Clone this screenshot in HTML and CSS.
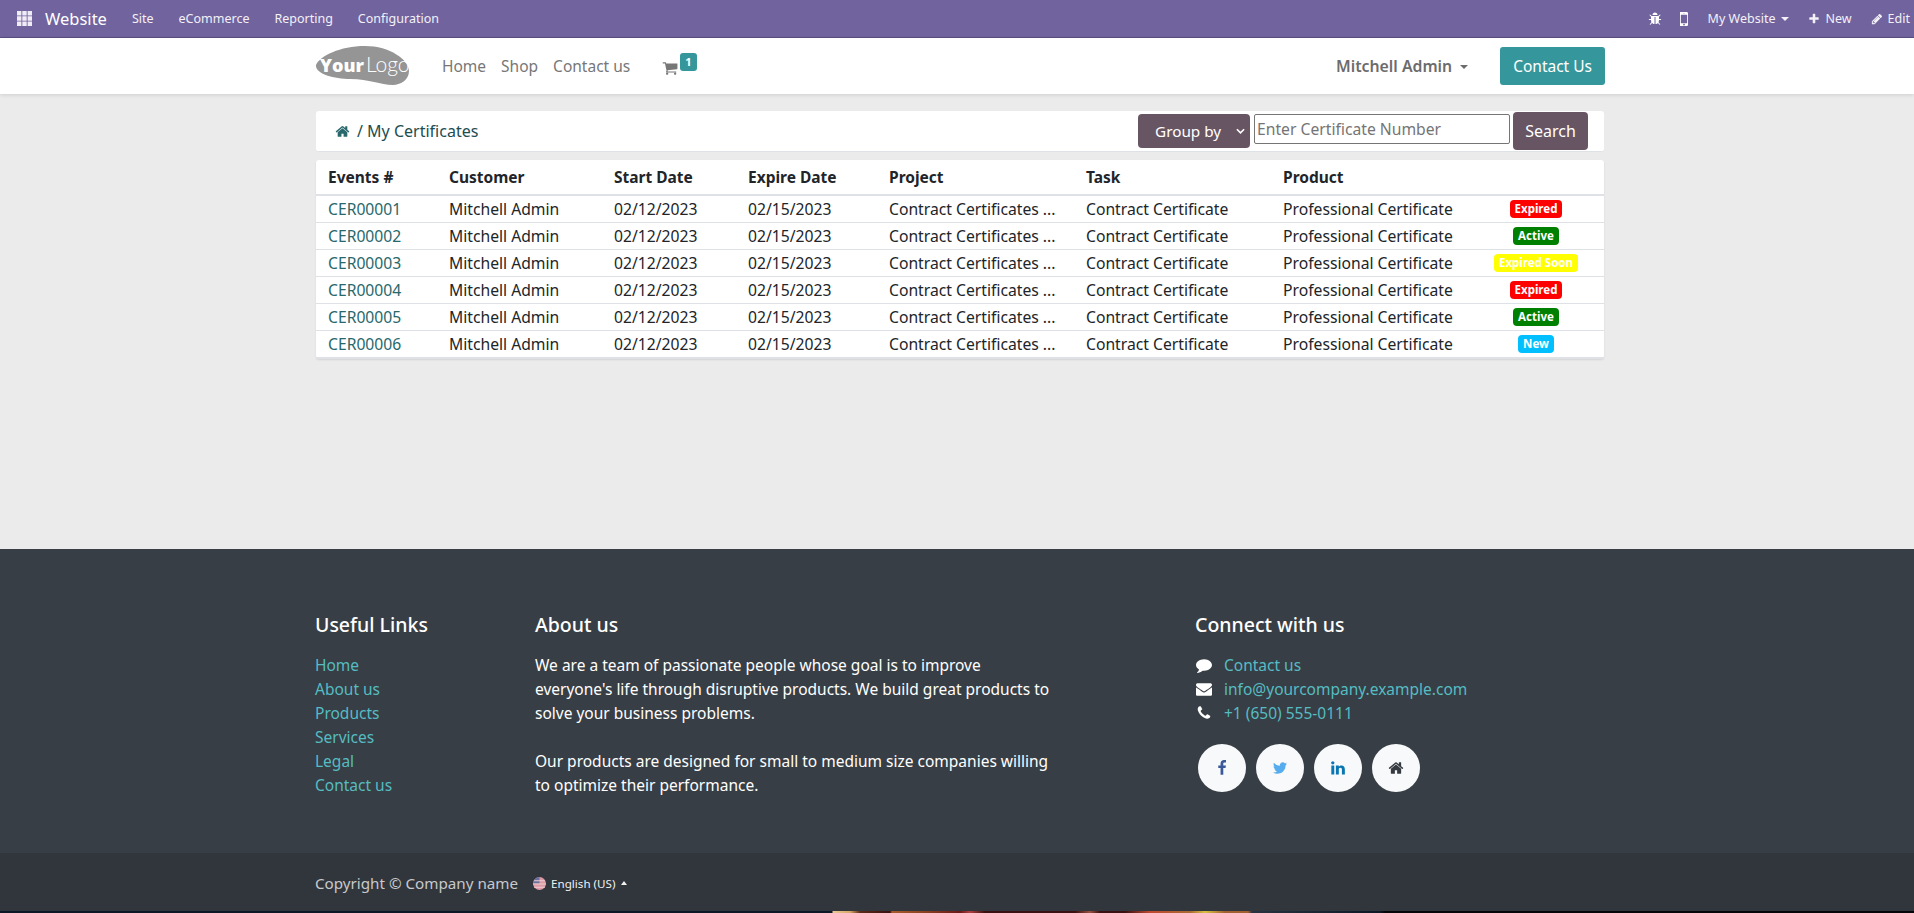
FILE: index.html
```html
<!DOCTYPE html>
<html lang="en">

<head>
  <meta charset="UTF-8">
  <meta name="viewport" content="width=device-width, initial-scale=1.0">
  <link rel="stylesheet" href="styles.css">
  <title>My Certificates</title>
</head>

<body>

  <div class="topbar">
    <div class="topbar-left">
      <svg class="apps-icon" viewBox="0 0 17 17"><path d="M0 0h5v5H0zM6 0h5v5H6zM12 0h5v5h-5zM0 6h5v5H0zM6 6h5v5H6zM12 6h5v5h-5zM0 12h5v5H0zM6 12h5v5H6zM12 12h5v5h-5z"/></svg>
      <span class="brand">Website</span>
      <a>Site</a>
      <a>eCommerce</a>
      <a>Reporting</a>
      <a>Configuration</a>
    </div>
    <div class="topbar-right">
      <svg class="tb-icon" viewBox="0 0 1792 1792"><path d="M1696 960q0 26-19 45t-45 19h-224q0 171-67 290l208 209q19 19 19 45t-19 45q-18 19-45 19t-45-19l-198-197q-5 5-15 13t-42 28.500-65 36.500-82 29-97 13v-896h-128v896q-51 0-101.500-13.500t-87-33-66-39-43.500-32.500l-15-14-183 207q-20 21-48 21-24 0-43-16-19-18-20.500-44.500t15.500-46.500l202-227q-58-114-58-274h-224q-26 0-45-19t-19-45 19-45 45-19h224v-294l-173-173q-19-19-19-45t19-45 45-19 45 19l173 173h844l173-173q19-19 45-19t45 19 19 45-19 45l-173 173v294h224q26 0 45 19t19 45zm-480-576h-640q0-133 93.500-226.500t226.500-93.500 226.500 93.500 93.500 226.500z"/></svg>
      <svg class="tb-icon mobile" viewBox="576 256 640 1280"><path d="M976 1408q0-33-23.500-56.500t-56.500-23.500-56.500 23.500-23.500 56.500 23.500 56.500 56.500 23.500 56.500-23.500 23.500-56.500zm208-160v-704q0-13-9.500-22.500t-22.500-9.500h-512q-13 0-22.500 9.500t-9.500 22.500v704q0 13 9.500 22.500t22.500 9.500h512q13 0 22.500-9.500t9.500-22.500zm-192-848q0-16-16-16h-160q-16 0-16 16t16 16h160q16 0 16-16zm288-16v1024q0 52-38 90t-90 38h-640q-52 0-90-38t-38-90v-1024q0-52 38-90t90-38h640q52 0 90 38t38 90z"/></svg>
      <a class="caret-link">My Website</a>
      <a class="icon-link"><svg class="tb-icon small" viewBox="0 0 1792 1792"><path d="M1600 736v192q0 40-28 68t-68 28h-416v416q0 40-28 68t-68 28h-192q-40 0-68-28t-28-68v-416h-416q-40 0-68-28t-28-68v-192q0-40 28-68t68-28h416v-416q0-40 28-68t68-28h192q40 0 68 28t28 68v416h416q40 0 68 28t28 68z"/></svg>New</a>
      <a class="icon-link"><svg class="tb-icon small" viewBox="0 0 1792 1792"><path d="M491 1536l91-91-235-235-91 91v107h128v128h107zm523-928q0-22-22-22-10 0-17 7l-542 542q-7 7-7 17 0 22 22 22 10 0 17-7l542-542q7-7 7-17zm-54-192l416 416-832 832h-416v-416zm683 96q0 53-37 90l-166 166-416-416 166-165q36-38 90-38 53 0 91 38l235 234q37 39 37 91z"/></svg>Edit</a>
    </div>
  </div>

  <header class="navbar">
    <div class="container navbar-inner">
      <svg class="logo" viewBox="0 0 96 40">
        <path d="M1 19C5 10 25 0 50 0c25 0 44 14 44 25 0 9-9 14-16 14-13 0-23-6-43-6C20 33 0 28 1 19z" fill="#959595"/>
        <text x="5" y="26"><tspan class="logo-your">Your</tspan><tspan class="logo-logo" dx="2">Logo</tspan></text>
      </svg>
      <nav class="main-nav">
        <a>Home</a>
        <a>Shop</a>
        <a>Contact us</a>
      </nav>
      <div class="cart">
        <svg class="cart-icon" viewBox="0 0 1792 1792"><path d="M704 1536q0 52-38 90t-90 38-90-38-38-90 38-90 90-38 90 38 38 90zm896 0q0 52-38 90t-90 38-90-38-38-90 38-90 90-38 90 38 38 90zm128-1088v512q0 24-16.500 42.500t-40.500 21.500l-1044 122q13 60 13 70 0 16-24 64h920q26 0 45 19t19 45-19 45-45 19h-1024q-26 0-45-19t-19-45q0-11 8-31.500t16-36 21.500-40 15.500-29.500l-177-823h-204q-26 0-45-19t-19-45 19-45 45-19h256q16 0 28.500 6.500t19.500 15.500 13 24.500 8 26 5.500 29.500 4.500 26h1201q26 0 45 19t19 45z"/></svg>
        <span class="cart-badge">1</span>
      </div>
      <div class="user-menu">Mitchell Admin</div>
      <a class="contact-btn">Contact Us</a>
    </div>
  </header>

  <main class="content">
    <div class="container">
      <div class="breadcrumb-card">
        <div class="crumbs">
          <svg class="crumb-home" viewBox="0 0 1792 1792"><path d="M1472 992v480q0 26-19 45t-45 19h-384v-384h-256v384h-384q-26 0-45-19t-19-45v-480q0-1 .5-3t.5-3l575-474 575 474q1 2 1 6zm223-69l-62 74q-8 9-21 11h-3q-13 0-21-7l-692-577-692 577q-12 8-24 7-13-2-21-11l-62-74q-8-10-7-23.500t11-21.500l719-599q32-26 76-26t76 26l244 204v-195q0-14 9-23t23-9h192q14 0 23 9t9 23v408l219 182q10 8 11 21.500t-7 23.500z"/></svg>
          <span>/ My Certificates</span>
        </div>
        <div class="search-tools">
          <div class="group-by">Group by<svg viewBox="0 0 10 6"><path d="M1 1l4 4 4-4" fill="none" stroke="#fff" stroke-width="1.800"/></svg></div>
          <input class="search-input" type="text" placeholder="Enter Certificate Number">
          <button class="search-btn">Search</button>
        </div>
      </div>

      <div class="table-card">
        <table class="cert-table">
          <colgroup>
            <col class="col-event"><col class="col-customer"><col class="col-start"><col class="col-expire"><col class="col-project"><col class="col-task"><col class="col-product"><col>
          </colgroup>
          <thead>
            <tr><th>Events #</th><th>Customer</th><th>Start Date</th><th>Expire Date</th><th>Project</th><th>Task</th><th>Product</th><th></th></tr>
          </thead>
          <tbody>
            <tr><td><a>CER00001</a></td><td>Mitchell Admin</td><td>02/12/2023</td><td>02/15/2023</td><td>Contract Certificates ...</td><td>Contract Certificate</td><td>Professional Certificate</td><td class="status"><span class="badge red">Expired</span></td></tr>
            <tr><td><a>CER00002</a></td><td>Mitchell Admin</td><td>02/12/2023</td><td>02/15/2023</td><td>Contract Certificates ...</td><td>Contract Certificate</td><td>Professional Certificate</td><td class="status"><span class="badge green">Active</span></td></tr>
            <tr><td><a>CER00003</a></td><td>Mitchell Admin</td><td>02/12/2023</td><td>02/15/2023</td><td>Contract Certificates ...</td><td>Contract Certificate</td><td>Professional Certificate</td><td class="status"><span class="badge yellow">Expired Soon</span></td></tr>
            <tr><td><a>CER00004</a></td><td>Mitchell Admin</td><td>02/12/2023</td><td>02/15/2023</td><td>Contract Certificates ...</td><td>Contract Certificate</td><td>Professional Certificate</td><td class="status"><span class="badge red">Expired</span></td></tr>
            <tr><td><a>CER00005</a></td><td>Mitchell Admin</td><td>02/12/2023</td><td>02/15/2023</td><td>Contract Certificates ...</td><td>Contract Certificate</td><td>Professional Certificate</td><td class="status"><span class="badge green">Active</span></td></tr>
            <tr><td><a>CER00006</a></td><td>Mitchell Admin</td><td>02/12/2023</td><td>02/15/2023</td><td>Contract Certificates ...</td><td>Contract Certificate</td><td>Professional Certificate</td><td class="status"><span class="badge blue">New</span></td></tr>
          </tbody>
        </table>
      </div>
    </div>
  </main>

  <footer class="footer">
    <div class="container footer-cols">
      <div class="col-links">
        <h5>Useful Links</h5>
        <ul>
          <li><a>Home</a></li>
          <li><a>About us</a></li>
          <li><a>Products</a></li>
          <li><a>Services</a></li>
          <li><a>Legal</a></li>
          <li><a>Contact us</a></li>
        </ul>
      </div>
      <div class="col-about">
        <h5>About us</h5>
        <p>We are a team of passionate people whose goal is to improve everyone's life through disruptive products. We build great products to solve your business problems.</p>
        <p>Our products are designed for small to medium size companies willing to optimize their performance.</p>
      </div>
      <div class="col-connect">
        <h5>Connect with us</h5>
        <ul>
          <li><svg viewBox="0 0 1792 1792"><path d="M1792 896q0 174-120 321.500t-326 233-450 85.500q-70 0-145-8-198 175-460 242-49 14-114 22-17 2-30.500-9t-17.500-29v-1q-3-4-.5-12t2-10 4.500-9.500l6-9 7-8.500 8-9q7-8 31-34.500t34.500-38 31-39.500 32.500-51 27-59 26-76q-157-89-247.500-220t-90.500-281q0-130 71-248.500t191-204.500 286-136.500 348-50.500q244 0 450 85.500t326 233 120 321.500z"/></svg><a>Contact us</a></li>
          <li><svg viewBox="0 0 1792 1792"><path d="M1792 710v794q0 66-47 113t-113 47h-1472q-66 0-113-47t-47-113v-794q44 49 101 87 362 246 497 345 57 42 92.500 65.500t94.500 48 110 24.500h2q51 0 110-24.500t94.500-48 92.500-65.500q170-123 498-345 57-39 100-87zm0-294q0 79-49 151t-122 123q-376 261-468 325-10 7-42.500 30.500t-54 38-52 32.500-57.500 27-50 9h-2q-23 0-50-9t-57.500-27-52-32.500-54-38-42.500-30.500q-91-64-262-182.500t-205-142.500q-62-42-117-115.500t-55-136.500q0-78 41.500-130t118.500-52h1472q65 0 112.500 47t47.500 113z"/></svg><a>info@yourcompany.example.com</a></li>
          <li><svg viewBox="0 0 1792 1792"><path d="M1600 1240q0 27-10 70.500t-21 68.500q-21 50-122 106-94 51-186 51-27 0-53-3.500t-57.500-12.500-47-14.500-55.500-20.500-49-18q-98-35-175-83-127-79-264-216t-216-264q-48-77-83-175-3-9-18-49t-20.500-55.500-14.500-47-12.500-57.500-3.500-53q0-92 51-186 56-101 106-122 25-11 68.500-21t70.500-10q14 0 21 3 18 6 53 76 11 19 30 54t35 63.500 31 53.500q3 4 17.500 25t21.500 35.500 7 28.500q0 20-28.500 50t-62 55-62 53-28.500 46q0 9 5 22.500t8.500 20.500 14 24 11.500 19q76 137 174 235t235 174q2 1 19 11.500t24 14 20.500 8.500 22.500 5q18 0 46-28.500t53-62 55-62 50-28.500q14 0 28.500 7t35.500 21.500 25 17.500q25 15 53.500 31t63.500 35 54 30q70 35 76 53 3 7 3 21z"/></svg><a>+1 (650) 555-0111</a></li>
        </ul>
        <div class="socials">
          <a class="social fb"><svg viewBox="0 0 1792 1792"><path d="M1343 12v264h-157q-86 0-116 36t-30 108v189h293l-39 296h-254v759h-306v-759h-255v-296h255v-218q0-186 104-288.500t277-102.500q147 0 228 12z"/></svg></a>
          <a class="social tw"><svg viewBox="0 0 1792 1792"><path d="M1684 408q-67 98-162 167 1 14 1 42 0 130-38 259.500t-115.500 248.500-184.500 210.500-258 146-323 54.500q-271 0-496-145 35 4 78 4 225 0 401-138-105-2-188-64.500t-114-159.500q33 5 61 5 43 0 85-11-112-23-185.500-111.500t-73.500-205.500v-4q68 38 146 41-66-44-105-115t-39-154q0-88 44-163 121 149 294.500 238.500t371.500 99.500q-8-38-8-74 0-134 94.500-228.500t228.500-94.500q140 0 236 102 109-21 205-78-37 115-142 178 92-10 184-50z"/></svg></a>
          <a class="social li"><svg viewBox="0 0 1792 1792"><path d="M477 625v991h-330v-991h330zm21-306q1 73-50.500 122t-135.500 49h-2q-82 0-132-49t-50-122q0-74 51.500-122.500t134.500-48.500 133 48.500 51 122.500zm1166 729v568h-329v-530q0-105-40.500-164.500t-126.500-59.500q-63 0-105.500 34.500t-63.500 85.500q-11 30-11 81v553h-329q2-399 2-647t-1-296l-1-48h329v144h-2q20-32 41-56t56.500-52 87-43.500 114.500-15.500q171 0 275 113.500t104 332.500z"/></svg></a>
          <a class="social hm"><svg viewBox="0 0 1792 1792"><path d="M1472 992v480q0 26-19 45t-45 19h-384v-384h-256v384h-384q-26 0-45-19t-19-45v-480q0-1 .5-3t.5-3l575-474 575 474q1 2 1 6zm223-69l-62 74q-8 9-21 11h-3q-13 0-21-7l-692-577-692 577q-12 8-24 7-13-2-21-11l-62-74q-8-10-7-23.500t11-21.500l719-599q32-26 76-26t76 26l244 204v-195q0-14 9-23t23-9h192q14 0 23 9t9 23v408l219 182q10 8 11 21.500t-7 23.500z"/></svg></a>
        </div>
      </div>
    </div>
  </footer>

  <div class="copyright">
    <div class="container copyright-inner">
      <span>Copyright © Company name</span>
      <span class="lang">
        <svg class="flag" viewBox="0 0 12 12"><circle cx="6" cy="6" r="6" fill="#dc9aa5"/><path d="M6 0a6 6 0 0 0-6 6h6z" fill="#6a6f9c"/><path d="M1 3h10v1H1zM0 6h12v1H0zM1 9h10v1H1z" fill="#eccdd2"/></svg>
        English (US)
      </span>
    </div>
  </div>
  <div class="next-strip"></div>

</body>

</html>
```

FILE: styles.css
```css
html, body {
  margin: 0;
  padding: 0;
}

body {
  width: 1914px;
  height: 913px;
  overflow: hidden;
  background-color: #ebebeb;
  font-family: "Noto Sans", sans-serif;
  font-size: 15px;
  color: #212529;
}

svg {
  fill: currentColor;
  flex: none;
}

.container {
  width: 1288px;
  margin-left: 316px;
}

/* top purple bar */
.topbar {
  display: flex;
  justify-content: space-between;
  align-items: center;
  height: 37px;
  border-bottom: 1px solid #5b4e80;
  background-color: #71639e;
  color: #fff;
  font-size: 12.500px;
}

.topbar a {
  color: #f3f1f7;
}

.topbar-left,
.topbar-right {
  display: flex;
  align-items: center;
}

.apps-icon {
  width: 15px;
  height: 15px;
  margin-left: 17px;
  color: #efecf5;
}

.brand {
  margin-left: 13px;
  font-size: 16.500px;
  margin-right: 25px;
}

.topbar-left a {
  margin-right: 25px;
}

.topbar-right {
  margin-right: 4px;
}

.tb-icon {
  width: 14px;
  height: 14px;
}

.tb-icon.mobile {
  width: 8px;
  margin-left: 18px;
  margin-right: 20px;
}

.tb-icon.small {
  width: 12px;
  height: 12px;
  margin-right: 5px;
}

.caret-link::after {
  content: "";
  display: inline-block;
  margin-left: 6px;
  vertical-align: 2px;
  border-top: 4px solid #f3f1f7;
  border-left: 4px solid transparent;
  border-right: 4px solid transparent;
}

.icon-link {
  display: flex;
  align-items: center;
  margin-left: 19px;
}

/* white site header */
.navbar {
  height: 56px;
  background-color: #fff;
  box-shadow: 0 1px 4px rgba(0, 0, 0, 0.12);
  position: relative;
}

.navbar-inner {
  display: flex;
  align-items: center;
  height: 56px;
}

.logo {
  width: 96px;
  height: 40px;
  margin-left: -1px;
  margin-right: 31px;
}

.logo-your {
  font-family: "Open Sans", sans-serif;
  font-weight: 800;
  font-size: 18px;
  fill: #fff;
}

.logo-logo {
  font-family: "Lato", sans-serif;
  font-weight: 300;
  font-size: 21px;
  fill: #fff;
}

.main-nav {
  display: flex;
  gap: 15px;
  font-size: 15.500px;
  color: #777;
}

.cart {
  display: flex;
  margin-left: 32px;
  color: #777;
  height: 30px;
}

.cart-icon {
  width: 16px;
  height: 16px;
  margin-top: 9px;
}

.cart-badge {
  height: 18px;
  margin-top: 2px;
  padding: 0 5px;
  border-radius: 3px;
  background-color: #35979c;
  color: #fff;
  font-size: 11px;
  font-weight: 700;
  line-height: 18px;
  margin-left: 2px;
}

.user-menu {
  margin-left: auto;
  font-size: 15.800px;
  font-weight: 600;
  color: #6c6c6c;
}

.user-menu::after {
  content: "";
  display: inline-block;
  margin-left: 8px;
  vertical-align: 3px;
  border-top: 4px solid #6c6c6c;
  border-left: 4px solid transparent;
  border-right: 4px solid transparent;
}

.contact-btn {
  margin-left: 32px;
  margin-right: -1px;
  padding: 0 13px;
  height: 38px;
  line-height: 38px;
  border-radius: 3px;
  background-color: #35979c;
  color: #fff;
  font-size: 15.500px;
}

/* main area */
.content {
  height: 455px;
  box-sizing: border-box;
  padding-top: 17px;
}

.breadcrumb-card {
  display: flex;
  justify-content: space-between;
  align-items: center;
  box-sizing: border-box;
  height: 41px;
  padding: 0 16px 0 19px;
  margin-bottom: 8px;
  border-radius: 3px;
  background-color: #fff;
  border-bottom: 1px solid #dee2e6;
}

.crumbs {
  display: flex;
  align-items: center;
  gap: 7px;
  font-size: 16px;
  color: #214d50;
}

.crumb-home {
  width: 15px;
  height: 15px;
  color: #28686c;
}

.search-tools {
  display: flex;
  align-items: center;
  gap: 3px;
}

.group-by {
  display: flex;
  align-items: center;
  justify-content: space-between;
  box-sizing: border-box;
  width: 112px;
  height: 34px;
  padding: 0 5px 0 17px;
  border-radius: 4px;
  background-color: #685563;
  color: #fff;
  font-size: 15.300px;
}

.group-by svg {
  width: 9px;
  height: 6px;
  fill: none;
}

.search-input {
  box-sizing: border-box;
  width: 256px;
  height: 30px;
  padding: 0 2px;
  margin-top: -4px;
  margin-left: 1px;
  border: 1px solid #767676;
  border-radius: 2px;
  font-family: inherit;
  font-size: 15.700px;
}

.search-input::placeholder {
  color: #757575;
}

.search-btn {
  width: 75px;
  height: 38px;
  border: none;
  border-radius: 4px;
  background-color: #685563;
  color: #fff;
  font-family: inherit;
  font-size: 16px;
}

.table-card {
  border-radius: 3px;
  border-bottom: 1px solid #dee2e6;
  background-color: #fff;
  box-shadow: 0 1px 2px rgba(0, 0, 0, 0.1);
}

.cert-table {
  width: 100%;
  table-layout: fixed;
  border-collapse: collapse;
  font-size: 15.700px;
}

.col-event { width: 121px; }
.col-customer { width: 165px; }
.col-start { width: 134px; }
.col-expire { width: 141px; }
.col-project { width: 197px; }
.col-task { width: 197px; }
.col-product { width: 197px; }

.cert-table th {
  height: 34px;
  padding: 0 12px;
  text-align: left;
  font-size: 15.500px;
  font-weight: 700;
  border-bottom: 2px solid #dee2e6;
}

.cert-table td {
  height: 25px;
  padding: 0 12px 1px;
  white-space: nowrap;
  overflow: hidden;
  border-bottom: 1px solid #dee2e6;
}

.cert-table a {
  color: #28686c;
}

.cert-table .status {
  text-align: center;
  padding: 0;
}

.badge {
  display: inline-block;
  padding: 0 5px;
  height: 18px;
  line-height: 17px;
  border-radius: 4px;
  color: #fff;
  font-size: 11.500px;
  font-weight: 700;
  vertical-align: 2px;
}

.red { background-color: #ff0000; }
.green { background-color: #008000; }
.yellow { background-color: #ffff00; }
.blue { background-color: #00bfff; }

/* footer */
.footer {
  height: 304px;
  box-sizing: border-box;
  background-color: #383e45;
  color: #fff;
  font-size: 15.500px;
}

.footer-cols {
  display: grid;
  grid-template-columns: 220px 660px 1fr;
  margin-left: 315px;
  padding-top: 66px;
}

.footer h5 {
  margin: 0 0 19px;
  font-size: 19.500px;
  font-weight: 500;
  line-height: 1;
  height: 19px;
}

.footer ul {
  list-style: none;
  margin: 0;
  padding: 0;
}

.footer li {
  height: 24px;
  line-height: 24px;
}

.footer a {
  color: #55bcc2;
}

.col-about {
  line-height: 24px;
}

.col-about p {
  width: 520px;
  margin: 0 0 24px;
}

.col-connect li {
  display: flex;
  align-items: center;
}

.col-connect li svg {
  width: 16px;
  height: 16px;
  margin: 0 12px 0 1px;
}

.socials {
  display: flex;
  gap: 10px;
  margin: 19px 0 0 3px;
}

.social {
  display: flex;
  align-items: center;
  justify-content: center;
  width: 48px;
  height: 48px;
  border-radius: 50%;
  background-color: #f8f9fa;
}

.social svg {
  width: 16px;
  height: 16px;
}

.fb svg { color: #3b5998; }
.tw svg { color: #55acee; }
.li svg { color: #0976b4; }
.hm svg { color: #343a40; }

.copyright {
  height: 58px;
  background-color: #31363d;
  color: #c8c9cb;
}

.copyright-inner {
  display: flex;
  align-items: center;
  gap: 15px;
  height: 60px;
  margin-left: 315px;
  font-size: 15.200px;
}

.lang {
  display: flex;
  align-items: center;
  color: #f1f1f1;
  font-size: 11.600px;
}

.lang::after {
  content: "";
  margin-left: 6px;
  border-bottom: 4px solid #f1f1f1;
  border-left: 3px solid transparent;
  border-right: 3px solid transparent;
}

.flag {
  width: 13px;
  height: 13px;
  margin-right: 5px;
}

.next-strip {
  height: 2px;
  background: linear-gradient(90deg, #0d1826 0, #0d1826 832px, #e8c890 833px, #d8a868 850px, #5a2a18 860px, #3a1010 890px, #a85a2a 892px, #8a4020 925px, #6a1818 960px, #b04040 970px, #3a1010 985px, #3a1010 1075px, #9a5040 1090px, #3a1010 1100px, #3a1010 1125px, #c04830 1150px, #a86a30 1190px, #d8c040 1205px, #a06030 1225px, #a06030 1248px, #28333f 1252px, #0d1826 1380px, #050508 1385px, #050508 1914px);
}
```
